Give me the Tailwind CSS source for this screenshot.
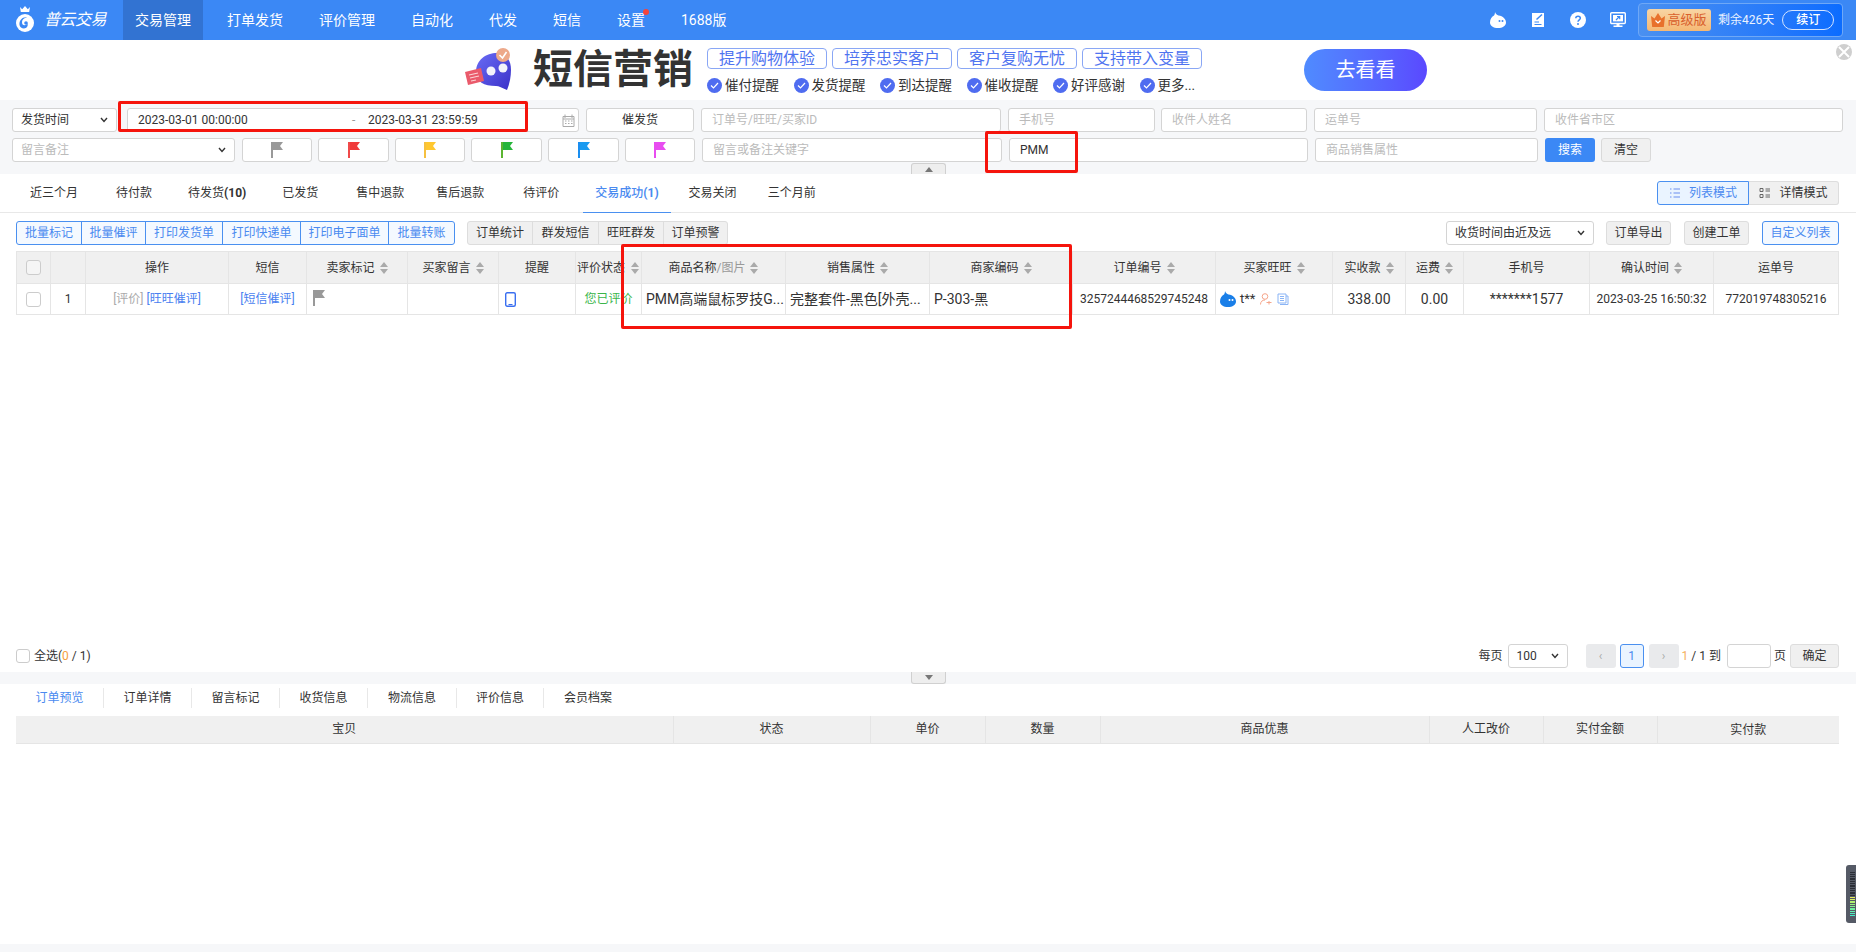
<!DOCTYPE html>
<html lang="zh-CN">
<head>
<meta charset="UTF-8">
<title>普云交易</title>
<script src="https://cdn.jsdelivr.net/npm/@tailwindcss/browser@4"></script>
</head>
<body class="bg-white">
<div class="relative flex flex-col w-[1856px] h-[952px] overflow-hidden text-xs text-[#333] font-['Roboto','Noto_Sans_CJK_SC',sans-serif]">

  <!-- top nav -->
  <header class="flex items-center h-10 shrink-0 bg-[#3b88f5] text-white">
    <div class="flex items-center w-[123px] h-10 pl-[15px]">
      <svg class="w-5 h-7 -mt-0.5" viewBox="0 0 20 28">
        <path d="M5 2l2.200 2.200L10 1l2.800 3.200L15 2l-.8 5H5.800z" fill="#fff"/>
        <circle cx="10" cy="18" r="9" fill="#fff"/>
        <path d="M4.500 20c-.5-5 3.500-8.500 7.500-7.500-3 .3-4.800 2-5 4.500-.2 2 1 3.300 2.500 3.300s2.500-1 2.500-2.300c2 2.500-.5 5.500-3 5.500S5 22 4.500 20z" fill="#3b88f5"/>
        <circle cx="11" cy="18" r="1.800" fill="#3b88f5"/>
      </svg>
      <span class="ml-[9px] text-base italic tracking-[-0.5px]">普云交易</span>
    </div>
    <nav class="flex items-center h-10 gap-3 text-sm">
      <a class="flex items-center h-10 px-3 bg-[#3273d2]">交易管理</a>
      <a class="flex items-center h-10 px-3">打单发货</a>
      <a class="flex items-center h-10 px-3">评价管理</a>
      <a class="flex items-center h-10 px-3">自动化</a>
      <a class="flex items-center h-10 px-3">代发</a>
      <a class="flex items-center h-10 px-3">短信</a>
      <a class="relative flex items-center h-10 px-3">设置<span class="absolute top-[9px] right-[8px] w-[6px] h-[6px] rounded-full bg-[#f5443c]"></span></a>
      <a class="flex items-center h-10 px-3">1688版</a>
    </nav>
    <div class="flex items-center ml-auto mr-[13px]">
      <div class="flex items-center gap-6">
        <svg class="w-4 h-4" viewBox="0 0 16 16"><path d="M5 0C5.500 2 7 3 8.500 3.500 13 4 16 7 16 10.500 16 14 12.500 16 8 16S0 14 0 10.500C0 7 2 4.500 4 3.500 4.800 2.500 5 1 5 0z" fill="#fff"/><circle cx="9.500" cy="9" r="1" fill="#3b88f5"/><circle cx="12.500" cy="9" r="1" fill="#3b88f5"/></svg>
        <svg class="w-4 h-4" viewBox="0 0 16 16"><path d="M2 1h9l3 0v14H2z" fill="#fff"/><path d="M4.500 10H9M4.500 12.500h7" stroke="#3b88f5" stroke-width="1.200"/><path d="M6.500 7.500L12 2.500" stroke="#3b88f5" stroke-width="1.500"/></svg>
        <svg class="w-4 h-4" viewBox="0 0 16 16"><circle cx="8" cy="8" r="8" fill="#fff"/><path d="M5.800 6.200C5.800 3.600 10.300 3.600 10.300 6.200 10.300 7.800 8 7.800 8 9.700" fill="none" stroke="#3b88f5" stroke-width="1.500"/><circle cx="8" cy="12" r="1" fill="#3b88f5"/></svg>
        <svg class="w-4 h-4" viewBox="0 0 16 16"><rect x=".7" y=".7" width="14.600" height="10.800" rx="1" fill="none" stroke="#fff" stroke-width="1.400"/><rect x="3" y="3" width="10" height="6.400" fill="#fff"/><path d="M6 8l3-3M7 4.500h2.700v2.700" fill="none" stroke="#3b88f5" stroke-width="1.200"/><path d="M6.500 11.500h3v2h-3zM3.500 13.500h9V15h-9z" fill="#fff"/></svg>
      </div>
      <div class="flex items-center w-[205px] h-[34px] ml-[12px] pl-2 border border-[#6ea8f7] rounded bg-gradient-to-r from-[#4a90f0] to-[#0a6cff]">
        <span class="flex items-center justify-center gap-[2px] w-16 h-[22px] rounded-[3px] bg-gradient-to-b from-[#f8d5a4] to-[#f5b874] text-[13px] text-[#d9602c]">
          <svg class="w-[14px] h-[14px] shrink-0" viewBox="0 0 14 14"><path d="M0 3l3.500 2.500L7 0l3.500 5.500L14 3l-1.200 11H1.200z" fill="#e8712c"/><path d="M4.500 7.500L7 10l2.500-2.500" fill="none" stroke="#fff" stroke-width="1.200"/></svg>高级版
        </span>
        <span class="ml-[7px] text-[#eaf2ff]">剩余426天</span>
        <span class="flex items-center justify-center w-[52px] h-5 ml-2 border border-[#d5e5ff] rounded-full font-medium">续订</span>
      </div>
    </div>
  </header>

  <!-- banner -->
  <section class="relative flex items-center h-[60px] shrink-0 pl-[462px]">
    <svg class="w-[55px] h-[44px] shrink-0" viewBox="0 0 55 44">
      <defs><linearGradient id="bub" x1="0" y1="0" x2="1" y2="1"><stop offset="0" stop-color="#6a6cf5"/><stop offset="1" stop-color="#3a30c8"/></linearGradient></defs>
      <path d="M14 24C14 12 24 5 35 5c9 0 14 7 14 17 0 8-2 15-4 20-5-2-8-4-11-4C22 38 14 34 14 24z" fill="url(#bub)"/>
      <circle cx="29" cy="23" r="4.500" fill="#f2f2fb"/><circle cx="41" cy="20" r="4.500" fill="#f2f2fb"/>
      <circle cx="41" cy="7" r="7" fill="#eda98a"/><path d="M37.500 7l3 3 4-6" fill="none" stroke="#fff" stroke-width="1.600"/>
      <path d="M3 24l16-4 3 13-16 4z" fill="#ea5a6b"/><path d="M7 27l9-2M8 30l9-2M9 33l5-1" stroke="#fbd5d5" stroke-width="1.200"/>
    </svg>
    <div class="ml-4 w-[174px] text-[40px] leading-none font-bold text-[#333]">短信营销</div>
    <div class="flex flex-col gap-[9px] w-[495px] pt-[1px]">
      <div class="flex gap-[5px] text-base text-[#4f74f0]">
        <span class="flex items-center justify-center w-[120px] h-[21px] border border-[#8aa7f5] rounded-[4px]">提升购物体验</span>
        <span class="flex items-center justify-center w-[120px] h-[21px] border border-[#8aa7f5] rounded-[4px]">培养忠实客户</span>
        <span class="flex items-center justify-center w-[120px] h-[21px] border border-[#8aa7f5] rounded-[4px]">客户复购无忧</span>
        <span class="flex items-center justify-center w-[120px] h-[21px] border border-[#8aa7f5] rounded-[4px]">支持带入变量</span>
      </div>
      <div class="flex text-[13.500px] leading-none text-[#333]">
        <span class="flex items-center gap-[3px] w-[86.500px]"><svg class="w-[15px] h-[15px]" viewBox="0 0 15 15"><circle cx="7.500" cy="7.500" r="7.500" fill="#4f6cf0"/><path d="M4 7.500l2.500 2.500L11 5" fill="none" stroke="#fff" stroke-width="1.200"/></svg>催付提醒</span>
        <span class="flex items-center gap-[3px] w-[86.500px]"><svg class="w-[15px] h-[15px]" viewBox="0 0 15 15"><circle cx="7.500" cy="7.500" r="7.500" fill="#4f6cf0"/><path d="M4 7.500l2.500 2.500L11 5" fill="none" stroke="#fff" stroke-width="1.200"/></svg>发货提醒</span>
        <span class="flex items-center gap-[3px] w-[86.500px]"><svg class="w-[15px] h-[15px]" viewBox="0 0 15 15"><circle cx="7.500" cy="7.500" r="7.500" fill="#4f6cf0"/><path d="M4 7.500l2.500 2.500L11 5" fill="none" stroke="#fff" stroke-width="1.200"/></svg>到达提醒</span>
        <span class="flex items-center gap-[3px] w-[86.500px]"><svg class="w-[15px] h-[15px]" viewBox="0 0 15 15"><circle cx="7.500" cy="7.500" r="7.500" fill="#4f6cf0"/><path d="M4 7.500l2.500 2.500L11 5" fill="none" stroke="#fff" stroke-width="1.200"/></svg>催收提醒</span>
        <span class="flex items-center gap-[3px] w-[86.500px]"><svg class="w-[15px] h-[15px]" viewBox="0 0 15 15"><circle cx="7.500" cy="7.500" r="7.500" fill="#4f6cf0"/><path d="M4 7.500l2.500 2.500L11 5" fill="none" stroke="#fff" stroke-width="1.200"/></svg>好评感谢</span>
        <span class="flex items-center gap-[3px]"><svg class="w-[15px] h-[15px]" viewBox="0 0 15 15"><circle cx="7.500" cy="7.500" r="7.500" fill="#4f6cf0"/><path d="M4 7.500l2.500 2.500L11 5" fill="none" stroke="#fff" stroke-width="1.200"/></svg>更多...</span>
      </div>
    </div>
    <a class="flex items-center justify-center w-[123px] h-[42px] ml-[102px] rounded-full bg-gradient-to-r from-[#4f8bff] to-[#5a48ff] text-xl text-white">去看看</a>
    <svg class="absolute top-[4px] right-[4px] w-4 h-4" viewBox="0 0 16 16"><circle cx="8" cy="8" r="8" fill="#cfcfcf"/><path d="M3 3l10 10M13 3L3 13" stroke="#fff" stroke-width="2"/></svg>
  </section>

  <!-- search form -->
  <section class="relative flex flex-col gap-[6px] h-[74px] shrink-0 pt-2 pl-3 bg-[#f6f7f9]">
    <div class="flex h-6">
      <div class="flex items-center justify-between w-[105px] h-6 px-[8px] border border-[#d4d4d4] rounded-[3px] bg-white">发货时间<svg class="w-2 h-2" viewBox="0 0 8 8"><path d="M1 2l3 3.500L7 2" fill="none" stroke="#333" stroke-width="1.400"/></svg></div>
      <div class="flex items-center w-[452px] h-6 ml-[10px] pl-[10px] border border-[#d4d4d4] rounded-[3px] bg-white">
        <span class="w-[214px]">2023-03-01 00:00:00</span><span class="w-[16px] text-[#999]">-</span><span>2023-03-31 23:59:59</span>
        <svg class="w-[13px] h-[13px] ml-auto mr-[3px]" viewBox="0 0 13 13"><path d="M1 2.500h11v10H1zM1 5h11M3 4V.5M10 4V.5M3 7h1.500M6 7h1.500M9 7h1.500M3 9.500h1.500M6 9.500h1.500M9 9.500h1.500" fill="none" stroke="#aaa"/></svg>
      </div>
      <button class="w-[108px] h-6 ml-[7px] border border-[#d4d4d4] rounded-[3px] bg-white">催发货</button>
      <input class="w-[300px] h-6 ml-[7px] px-[10px] border border-[#d4d4d4] rounded-[3px] bg-white placeholder:text-[#bbb]" placeholder="订单号/旺旺/买家ID">
      <input class="w-[147px] h-6 ml-[7px] px-[10px] border border-[#d4d4d4] rounded-[3px] bg-white placeholder:text-[#bbb]" placeholder="手机号">
      <input class="w-[146px] h-6 ml-[6px] px-[10px] border border-[#d4d4d4] rounded-[3px] bg-white placeholder:text-[#bbb]" placeholder="收件人姓名">
      <input class="w-[223px] h-6 ml-[7px] px-[10px] border border-[#d4d4d4] rounded-[3px] bg-white placeholder:text-[#bbb]" placeholder="运单号">
      <input class="w-[299px] h-6 ml-[7px] px-[10px] border border-[#d4d4d4] rounded-[3px] bg-white placeholder:text-[#bbb]" placeholder="收件省市区">
    </div>
    <div class="flex h-6">
      <div class="flex items-center justify-between w-[223px] h-6 px-[8px] border border-[#d4d4d4] rounded-[3px] bg-white text-[#bbb]">留言备注<svg class="w-2 h-2" viewBox="0 0 8 8"><path d="M1 2l3 3.500L7 2" fill="none" stroke="#333" stroke-width="1.400"/></svg></div>
      <button class="flex items-center justify-center w-[70px] h-6 ml-[7px] border border-[#d4d4d4] rounded-[3px] bg-white"><svg class="w-[14px] h-4" viewBox="0 0 14 16"><path d="M1 0h2v16H1z" fill="#999"/><path d="M3 0h10l-3 4 3 4H3z" fill="#999"/></svg></button>
      <button class="flex items-center justify-center w-[71px] h-6 ml-[6px] border border-[#d4d4d4] rounded-[3px] bg-white"><svg class="w-[14px] h-4" viewBox="0 0 14 16"><path d="M1 0h2v16H1z" fill="#f04a4a"/><path d="M3 0h10l-3 4 3 4H3z" fill="#f03a3a"/></svg></button>
      <button class="flex items-center justify-center w-[70px] h-6 ml-[6px] border border-[#d4d4d4] rounded-[3px] bg-white"><svg class="w-[14px] h-4" viewBox="0 0 14 16"><path d="M1 0h2v16H1z" fill="#f5c040"/><path d="M3 0h10l-3 4 3 4H3z" fill="#ffc72f"/></svg></button>
      <button class="flex items-center justify-center w-[71px] h-6 ml-[6px] border border-[#d4d4d4] rounded-[3px] bg-white"><svg class="w-[14px] h-4" viewBox="0 0 14 16"><path d="M1 0h2v16H1z" fill="#5cb531"/><path d="M3 0h10l-3 4 3 4H3z" fill="#25b53a"/></svg></button>
      <button class="flex items-center justify-center w-[71px] h-6 ml-[6px] border border-[#d4d4d4] rounded-[3px] bg-white"><svg class="w-[14px] h-4" viewBox="0 0 14 16"><path d="M1 0h2v16H1z" fill="#1a8ef0"/><path d="M3 0h10l-3 4 3 4H3z" fill="#1a9bf0"/></svg></button>
      <button class="flex items-center justify-center w-[70px] h-6 ml-[6px] border border-[#d4d4d4] rounded-[3px] bg-white"><svg class="w-[14px] h-4" viewBox="0 0 14 16"><path d="M1 0h2v16H1z" fill="#e84df0"/><path d="M3 0h10l-3 4 3 4H3z" fill="#e84df0"/></svg></button>
      <input class="w-[300px] h-6 ml-[7px] px-[10px] border border-[#d4d4d4] rounded-[3px] bg-white placeholder:text-[#bbb]" placeholder="留言或备注关键字">
      <input class="w-[299px] h-6 ml-[7px] px-[10px] border border-[#d4d4d4] rounded-[3px] bg-white" value="PMM">
      <input class="w-[223px] h-6 ml-[7px] px-[10px] border border-[#d4d4d4] rounded-[3px] bg-white placeholder:text-[#bbb]" placeholder="商品销售属性">
      <button class="w-[50px] h-6 ml-[7px] rounded-[3px] bg-[#3b88f5] text-white">搜索</button>
      <button class="w-[50px] h-6 ml-[6px] border border-[#d9d9d9] rounded-[3px] bg-[#f0f0f0]">清空</button>
    </div>
    <div class="absolute left-[911px] bottom-0 flex items-center justify-center w-[35px] h-[11px] border border-b-0 border-[#d0d0d0] rounded-t-[3px] bg-[#eee]"><span class="w-0 h-0 border-x-[4px] border-x-transparent border-b-[5px] border-b-[#777]"></span></div>
  </section>

  <!-- status tabs -->
  <section class="flex items-center h-[39px] shrink-0 pl-[18px] pr-[17px] border-b border-[#e8e8e8]">
    <a class="flex items-center h-[38px] px-3">近三个月</a>
    <a class="flex items-center h-[38px] px-3 ml-[14px]">待付款</a>
    <a class="flex items-center h-[38px] px-3 ml-3">待发货<b class="font-bold">(10)</b></a>
    <a class="flex items-center h-[38px] px-3 ml-3">已发货</a>
    <a class="flex items-center h-[38px] px-3 ml-[14px]">售中退款</a>
    <a class="flex items-center h-[38px] px-3 ml-2">售后退款</a>
    <a class="flex items-center h-[38px] px-3 ml-[15px]">待评价</a>
    <a class="flex items-center h-[39px] px-3 ml-3 border-b border-[#4a90f0] text-[#4a8af0] font-medium">交易成功<b class="font-bold">(1)</b></a>
    <a class="flex items-center h-[38px] px-3 ml-[6px]">交易关闭</a>
    <a class="flex items-center h-[38px] px-3 ml-[7px]">三个月前</a>
    <div class="flex ml-auto h-6">
      <span class="flex items-center justify-center gap-2 w-[92px] h-6 border border-[#4a90f0] rounded-l-[3px] bg-[#eaf4ff] text-[#4a8af0]"><svg class="w-3 h-3" viewBox="0 0 12 12"><path d="M1 2h1.500M1 6h1.500M1 10h1.500M4.500 2H11M4.500 6H11M4.500 10H11" stroke="#6a8ef0" stroke-width="1.200"/></svg>列表模式</span>
      <span class="flex items-center justify-center gap-2 w-[90px] h-6 border border-l-0 border-[#ddd] rounded-r-[3px] bg-[#f0f0f0]"><svg class="w-3 h-3" viewBox="0 0 12 12"><path d="M1 1.500h3v3H1zM1 7.500h3v3H1zM6.500 2H11M6.500 4H11M6.500 8H11M6.500 10H11" fill="none" stroke="#666"/></svg>详情模式</span>
    </div>
  </section>

  <!-- toolbar -->
  <section class="flex items-center h-[38px] shrink-0 pl-4 pr-[17px] pt-[1px]">
    <div class="flex h-6 border border-[#4a90f0] rounded-[3px] bg-[#f4f9ff] text-[#4a8af0]">
      <span class="flex items-center justify-center w-[65px] border-r border-[#4a90f0]">批量标记</span>
      <span class="flex items-center justify-center w-[64px] border-r border-[#4a90f0]">批量催评</span>
      <span class="flex items-center justify-center w-[77px] border-r border-[#4a90f0]">打印发货单</span>
      <span class="flex items-center justify-center w-[78px] border-r border-[#4a90f0]">打印快递单</span>
      <span class="flex items-center justify-center w-[88px] border-r border-[#4a90f0]">打印电子面单</span>
      <span class="flex items-center justify-center w-[65px]">批量转账</span>
    </div>
    <div class="flex h-6 ml-3 border border-[#ddd] rounded-[3px] bg-[#f0f0f0]">
      <span class="flex items-center justify-center w-[65px] border-r border-[#ddd]">订单统计</span>
      <span class="flex items-center justify-center w-[66px] border-r border-[#ddd]">群发短信</span>
      <span class="flex items-center justify-center w-[65px] border-r border-[#ddd]">旺旺群发</span>
      <span class="flex items-center justify-center w-[63px]">订单预警</span>
    </div>
    <div class="flex items-center justify-between w-[148px] h-6 ml-auto px-[8px] border border-[#d4d4d4] rounded-[3px] bg-white">收货时间由近及远<svg class="w-2 h-2" viewBox="0 0 8 8"><path d="M1 2l3 3.500L7 2" fill="none" stroke="#333" stroke-width="1.400"/></svg></div>
    <button class="w-[65px] h-6 ml-3 border border-[#ddd] rounded-[3px] bg-[#f0f0f0]">订单导出</button>
    <button class="w-[65px] h-6 ml-[13px] border border-[#ddd] rounded-[3px] bg-[#f0f0f0]">创建工单</button>
    <button class="w-[77px] h-6 ml-[13px] border border-[#4a90f0] rounded-[3px] bg-[#f4f9ff] text-[#4a8af0]">自定义列表</button>
  </section>

  <!-- orders table -->
  <div class="shrink-0 pl-4">
    <table class="w-[1823px] table-fixed border-collapse">
      <thead class="bg-[#f0f0f0]">
        <tr class="h-8">
          <th class="w-[34px] border border-[#e5e5e5] font-normal"><span class="block w-[15px] h-[15px] mx-auto border border-[#ccc] rounded-[3px] bg-[#f5f5f5]"></span></th>
          <th class="w-[35px] border border-[#e5e5e5] font-normal"></th>
          <th class="w-[143px] border border-[#e5e5e5] font-normal">操作</th>
          <th class="w-[78px] border border-[#e5e5e5] font-normal">短信</th>
          <th class="w-[101px] border border-[#e5e5e5] font-normal"><div class="flex items-center justify-center gap-[5px]">卖家标记<svg class="w-2 h-3" viewBox="0 0 8 12"><path d="M4 0l4 5H0zM0 7h8l-4 5z" fill="#aaa"/></svg></div></th>
          <th class="w-[91px] border border-[#e5e5e5] font-normal"><div class="flex items-center justify-center gap-[5px]">买家留言<svg class="w-2 h-3" viewBox="0 0 8 12"><path d="M4 0l4 5H0zM0 7h8l-4 5z" fill="#aaa"/></svg></div></th>
          <th class="w-[77px] border border-[#e5e5e5] font-normal">提醒</th>
          <th class="w-[66px] border border-[#e5e5e5] font-normal"><div class="flex items-center gap-[6px] pl-[1px]">评价状态<svg class="w-2 h-3" viewBox="0 0 8 12"><path d="M4 0l4 5H0zM0 7h8l-4 5z" fill="#aaa"/></svg></div></th>
          <th class="w-[144px] border border-[#e5e5e5] font-normal"><div class="flex items-center justify-center gap-[5px]"><span>商品名称<span class="text-[#999]">/图片</span></span><svg class="w-2 h-3" viewBox="0 0 8 12"><path d="M4 0l4 5H0zM0 7h8l-4 5z" fill="#aaa"/></svg></div></th>
          <th class="w-[144px] border border-[#e5e5e5] font-normal"><div class="flex items-center justify-center gap-[5px]">销售属性<svg class="w-2 h-3" viewBox="0 0 8 12"><path d="M4 0l4 5H0zM0 7h8l-4 5z" fill="#aaa"/></svg></div></th>
          <th class="w-[143px] border border-[#e5e5e5] font-normal"><div class="flex items-center justify-center gap-[5px]">商家编码<svg class="w-2 h-3" viewBox="0 0 8 12"><path d="M4 0l4 5H0zM0 7h8l-4 5z" fill="#aaa"/></svg></div></th>
          <th class="w-[143px] border border-[#e5e5e5] font-normal"><div class="flex items-center justify-center gap-[5px]">订单编号<svg class="w-2 h-3" viewBox="0 0 8 12"><path d="M4 0l4 5H0zM0 7h8l-4 5z" fill="#aaa"/></svg></div></th>
          <th class="w-[117px] border border-[#e5e5e5] font-normal"><div class="flex items-center justify-center gap-[5px]">买家旺旺<svg class="w-2 h-3" viewBox="0 0 8 12"><path d="M4 0l4 5H0zM0 7h8l-4 5z" fill="#aaa"/></svg></div></th>
          <th class="w-[73px] border border-[#e5e5e5] font-normal"><div class="flex items-center justify-center gap-[5px]">实收款<svg class="w-2 h-3" viewBox="0 0 8 12"><path d="M4 0l4 5H0zM0 7h8l-4 5z" fill="#aaa"/></svg></div></th>
          <th class="w-[58px] border border-[#e5e5e5] font-normal"><div class="flex items-center justify-center gap-[5px]">运费<svg class="w-2 h-3" viewBox="0 0 8 12"><path d="M4 0l4 5H0zM0 7h8l-4 5z" fill="#aaa"/></svg></div></th>
          <th class="w-[126px] border border-[#e5e5e5] font-normal">手机号</th>
          <th class="w-[124px] border border-[#e5e5e5] font-normal"><div class="flex items-center justify-center gap-[5px]">确认时间<svg class="w-2 h-3" viewBox="0 0 8 12"><path d="M4 0l4 5H0zM0 7h8l-4 5z" fill="#aaa"/></svg></div></th>
          <th class="w-[125px] border border-[#e5e5e5] font-normal">运单号</th>
        </tr>
      </thead>
      <tbody>
        <tr class="h-[31px] text-center">
          <td class="border border-[#e5e5e5]"><span class="block w-[15px] h-[15px] mx-auto border border-[#ccc] rounded-[3px]"></span></td>
          <td class="border border-[#e5e5e5]">1</td>
          <td class="border border-[#e5e5e5]"><span class="text-[#aaa]">[评价]</span> <span class="text-[#4a7ff0]">[旺旺催评]</span></td>
          <td class="border border-[#e5e5e5] text-[#4a7ff0]">[短信催评]</td>
          <td class="border border-[#e5e5e5] align-top"><svg class="w-[14px] h-4 mt-[6px] ml-[5px]" viewBox="0 0 14 16"><path d="M1 0h2v16H1z" fill="#999"/><path d="M3 0h10l-3 4 3 4H3z" fill="#999"/></svg></td>
          <td class="border border-[#e5e5e5]"></td>
          <td class="border border-[#e5e5e5]"><svg class="w-[11px] h-[15px] ml-[6px]" viewBox="0 0 11 15"><rect x=".7" y=".7" width="9.600" height="13.600" rx="1.500" fill="none" stroke="#3a6ff0" stroke-width="1.400"/><path d="M3.500 12.500h4" stroke="#3a6ff0"/></svg></td>
          <td class="border border-[#e5e5e5] text-[#3ab54a]">您已评价</td>
          <td class="border border-[#e5e5e5] pl-[4px] text-left text-sm whitespace-nowrap overflow-hidden">PMM高端鼠标罗技G...</td>
          <td class="border border-[#e5e5e5] pl-[4px] text-left text-sm whitespace-nowrap overflow-hidden">完整套件-黑色[外壳...</td>
          <td class="border border-[#e5e5e5] pl-[4px] text-left text-sm">P-303-黑</td>
          <td class="border border-[#e5e5e5]">3257244468529745248</td>
          <td class="border border-[#e5e5e5]">
            <div class="flex items-center pl-[4px]">
              <svg class="w-4 h-4 shrink-0" viewBox="0 0 16 16"><path d="M5 0C5.500 2 7 3 8.500 3.500 13 4 16 7 16 10.500 16 14 12.500 16 8 16S0 14 0 10.500C0 7 2 4.500 4 3.500 4.800 2.500 5 1 5 0z" fill="#1a7fe8"/><circle cx="9.500" cy="9" r="1" fill="#fff"/><circle cx="12.500" cy="9" r="1" fill="#fff"/></svg>
              <span class="ml-[4px] text-[13px]">t**</span>
              <svg class="w-3 h-3 ml-[5px] shrink-0" viewBox="0 0 12 12"><circle cx="5" cy="3.500" r="2.800" fill="none" stroke="#f5a58a"/><path d="M.5 11.500c0-3 2-4.500 4.500-4.500M6.500 9.500h5M9 8v3.500" fill="none" stroke="#f5a58a"/></svg>
              <svg class="w-3 h-3 ml-[5px] shrink-0" viewBox="0 0 12 12"><path d="M1 1h8v9H1zM3 3.500h4M3 5.500h4M3 7.500h4M9 3h2v8.500H3" fill="none" stroke="#8ab4f5"/></svg>
            </div>
          </td>
          <td class="border border-[#e5e5e5] text-sm">338.00</td>
          <td class="border border-[#e5e5e5] text-sm">0.00</td>
          <td class="border border-[#e5e5e5] text-sm">*******1577</td>
          <td class="border border-[#e5e5e5]">2023-03-25 16:50:32</td>
          <td class="border border-[#e5e5e5]">772019748305216</td>
        </tr>
      </tbody>
    </table>
  </div>

  <div class="flex-1"></div>

  <!-- select all and pagination -->
  <section class="flex items-center h-8 shrink-0 pl-4 pr-[17px]">
    <span class="w-[14px] h-[14px] border border-[#ccc] rounded-[3px]"></span>
    <span class="ml-1">全选(<span class="text-[#f5a040]">0</span> / 1)</span>
    <span class="ml-auto">每页</span>
    <div class="flex items-center justify-between w-[60px] h-6 ml-[5px] px-[8px] border border-[#d4d4d4] rounded-[3px] bg-white">100<svg class="w-2 h-2" viewBox="0 0 8 8"><path d="M1 2l3 3.500L7 2" fill="none" stroke="#333" stroke-width="1.400"/></svg></div>
    <span class="flex items-center justify-center w-[30px] h-6 ml-[18px] rounded-[3px] bg-[#e9eaec] text-[#aaa]">‹</span>
    <span class="flex items-center justify-center w-6 h-6 ml-[4px] border border-[#4a90f0] rounded-[3px] bg-[#eaf4ff] text-[#4a8af0]">1</span>
    <span class="flex items-center justify-center w-[30px] h-6 ml-[5px] rounded-[3px] bg-[#e9eaec] text-[#aaa]">›</span>
    <span class="ml-[3px]"><span class="text-[#f5b060]">1</span> / 1 到</span>
    <span class="w-[44px] h-6 ml-[6px] border border-[#d4d4d4] rounded-[3px] bg-white"></span>
    <span class="ml-[3px]">页</span>
    <button class="w-[49px] h-6 ml-1 border border-[#ddd] rounded-[3px] bg-[#f0f0f0]">确定</button>
  </section>

  <div class="relative h-3 shrink-0 bg-[#f6f7f9]">
    <div class="absolute left-[911px] top-0 flex items-center justify-center w-[35px] h-3 border border-t-0 border-[#d0d0d0] rounded-b-[3px] bg-[#eee]"><span class="w-0 h-0 border-x-[4px] border-x-transparent border-t-[5px] border-t-[#777]"></span></div>
  </div>

  <!-- detail panel -->
  <section class="flex items-start h-8 shrink-0 pt-1 pl-4">
    <a class="flex items-center justify-center w-[88px] h-5 border-r border-[#e8e8e8] text-[#4a8af0]">订单预览</a>
    <a class="flex items-center justify-center w-[88px] h-5 border-r border-[#e8e8e8]">订单详情</a>
    <a class="flex items-center justify-center w-[88px] h-5 border-r border-[#e8e8e8]">留言标记</a>
    <a class="flex items-center justify-center w-[88px] h-5 border-r border-[#e8e8e8]">收货信息</a>
    <a class="flex items-center justify-center w-[89px] h-5 border-r border-[#e8e8e8]">物流信息</a>
    <a class="flex items-center justify-center w-[87px] h-5 border-r border-[#e8e8e8]">评价信息</a>
    <a class="flex items-center justify-center w-[88px] h-5">会员档案</a>
  </section>
  <div class="shrink-0 pl-4">
    <table class="w-[1823px] table-fixed border-collapse bg-[#f0f0f0]">
      <tr class="h-7 border-b border-[#e5e5e5]">
        <th class="w-[657px] border-r border-[#e5e5e5] font-normal">宝贝</th>
        <th class="w-[197px] border-r border-[#e5e5e5] font-normal">状态</th>
        <th class="w-[115px] border-r border-[#e5e5e5] font-normal">单价</th>
        <th class="w-[115px] border-r border-[#e5e5e5] font-normal">数量</th>
        <th class="w-[329px] border-r border-[#e5e5e5] font-normal">商品优惠</th>
        <th class="w-[114px] border-r border-[#e5e5e5] font-normal">人工改价</th>
        <th class="w-[114px] border-r border-[#e5e5e5] font-normal">实付金额</th>
        <th class="w-[182px] pt-[2px] font-normal">实付款</th>
      </tr>
    </table>
  </div>
  <div class="flex-1 min-h-[200px] max-h-[200px]"></div>
  <div class="h-2 shrink-0 bg-[#f6f7f9]"></div>

  <!-- red marks from the screenshot -->
  <div class="absolute left-[118px] top-[101px] w-[410px] h-[31px] border-[3px] border-[#f5140c] rounded-[2px]"></div>
  <div class="absolute left-[985px] top-[131px] w-[93px] h-[42px] border-[3px] border-[#f5140c] rounded-[2px]"></div>
  <div class="absolute left-[621px] top-[244px] w-[451px] h-[85px] border-[3px] border-[#f5140c] rounded-[2px]"></div>

  <!-- side widget -->
  <div class="absolute left-[1846px] top-[865px] flex flex-col justify-center gap-[1px] w-[10px] h-[58px] pl-1 rounded-l-[3px] bg-[#555a66]">
    <i class="block w-[5px] h-[1.300px] bg-[#2b2e36]"></i><i class="block w-[5px] h-[1.300px] bg-[#2b2e36]"></i><i class="block w-[5px] h-[1.300px] bg-[#2b2e36]"></i><i class="block w-[5px] h-[1.300px] bg-[#2b2e36]"></i><i class="block w-[5px] h-[1.300px] bg-[#2b2e36]"></i><i class="block w-[5px] h-[1.300px] bg-[#2b2e36]"></i><i class="block w-[5px] h-[1.300px] bg-[#2b2e36]"></i><i class="block w-[5px] h-[1.300px] bg-[#2b2e36]"></i><i class="block w-[5px] h-[1.300px] bg-[#2b2e36]"></i><i class="block w-[5px] h-[1.300px] bg-[#2b2e36]"></i><i class="block w-[5px] h-[1.300px] bg-[#2b2e36]"></i>
    <i class="block w-[5px] h-[1.300px] bg-[#e6ee5a]"></i><i class="block w-[5px] h-[1.300px] bg-[#d8ee66]"></i><i class="block w-[5px] h-[1.300px] bg-[#b0f070]"></i><i class="block w-[5px] h-[1.300px] bg-[#98f080]"></i><i class="block w-[5px] h-[1.300px] bg-[#80f090]"></i><i class="block w-[5px] h-[1.300px] bg-[#70f0a0]"></i><i class="block w-[5px] h-[1.300px] bg-[#60f0b0]"></i><i class="block w-[5px] h-[1.300px] bg-[#50eec0]"></i><i class="block w-[5px] h-[1.300px] bg-[#40eec8]"></i>
  </div>
</div>
</body>
</html>
